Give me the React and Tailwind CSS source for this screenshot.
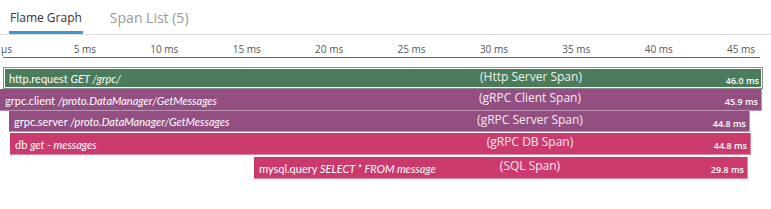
const ticks = ['10 ms', '15 ms', '20 ms', '25 ms', '30 ms', '35 ms', '40 ms', '45 ms'];

const spans = [
  { name: 'http.request', detail: 'GET /grpc/', kind: '(Http Server Span)', dur: '46.0 ms', left: 3, width: 760, h: 22, color: 'bg-[#4a7b5b]', root: true },
  { name: 'grpc.client', detail: '/proto.DataManager/GetMessages', kind: '(gRPC Client Span)', dur: '45.9 ms', left: 0, width: 762, h: 22, color: 'bg-[#934e82]' },
  { name: 'grpc.server', detail: '/proto.DataManager/GetMessages', kind: '(gRPC Server Span)', dur: '44.8 ms', left: 9, width: 741, h: 21, color: 'bg-[#934e82]' },
  { name: 'db', detail: 'get - messages', kind: '(gRPC DB Span)', dur: '44.8 ms', left: 10, width: 741, h: 22, color: 'bg-[#ca3a6d]' },
  { name: 'mysql.query', detail: 'SELECT * FROM message', kind: '(SQL Span)', dur: '29.8 ms', left: 254, width: 494, h: 22, color: 'bg-[#ca3a6d]' },
];

// center labels sit at a fixed column in the chart
const KIND_CENTER = 530;

function SpanBar({ s }) {
  return (
    <div
      className={`relative flex items-center text-white ${s.color} ${s.root ? 'border border-[#8a8a8a] shadow-[inset_0_0_0_1px_#ffffff]' : 'border-b border-r border-white/40'}`}
      style={{ marginLeft: s.left, width: s.width, height: s.h }}
    >
      <span className="pl-[5px] pt-[1px] font-['Lato',sans-serif] text-[11px] leading-none whitespace-nowrap">
        {s.name} <i>{s.detail}</i>
      </span>
      <span
        className="absolute top-[1px] -translate-x-1/2 text-[12px] leading-[16px] whitespace-nowrap text-white/90"
        style={{ left: KIND_CENTER - s.left }}
      >
        {s.kind}
      </span>
      <span className="ml-auto pr-[3px] pt-[4px] text-[9px] font-semibold leading-none whitespace-nowrap">{s.dur}</span>
    </div>
  );
}

export default function App() {
  return (
    <div className="w-[771px] h-[209px] bg-white font-['Open_Sans',sans-serif] overflow-hidden">
      <div className="flex h-[35px] border-b border-[#dedede]">
        <div className="ml-[9px] flex flex-col">
          <span className="pt-[9px] px-[1px] text-[12px] leading-[18px] text-[#333] whitespace-nowrap">Flame Graph</span>
          <div className="mt-auto h-[3px] bg-[#3d97d0]" />
        </div>
        <div className="ml-[27px] pt-[9px] text-[14px] leading-[18px] text-[#999] whitespace-nowrap">Span List (5)</div>
      </div>

      <div className="flex pt-[7px] pb-[1px] text-[10px] leading-[14px] text-[#555]">
        <div className="w-[96px] flex justify-between pl-[1px]">
          <span>µs</span>
          <span>5 ms</span>
        </div>
        {ticks.map((t) => (
          <div key={t} className="w-[82.4px] text-right">{t}</div>
        ))}
      </div>
      <div className="ml-[3px] w-[757px] h-[1px] bg-[#666]" />

      <div className="mt-[9px] flex flex-col">
        {spans.map((s, i) => (
          <div key={s.name} className={i === 4 ? 'mt-[2px]' : i === 3 ? 'mt-[1px]' : ''}>
            <SpanBar s={s} />
          </div>
        ))}
      </div>
    </div>
  );
}
